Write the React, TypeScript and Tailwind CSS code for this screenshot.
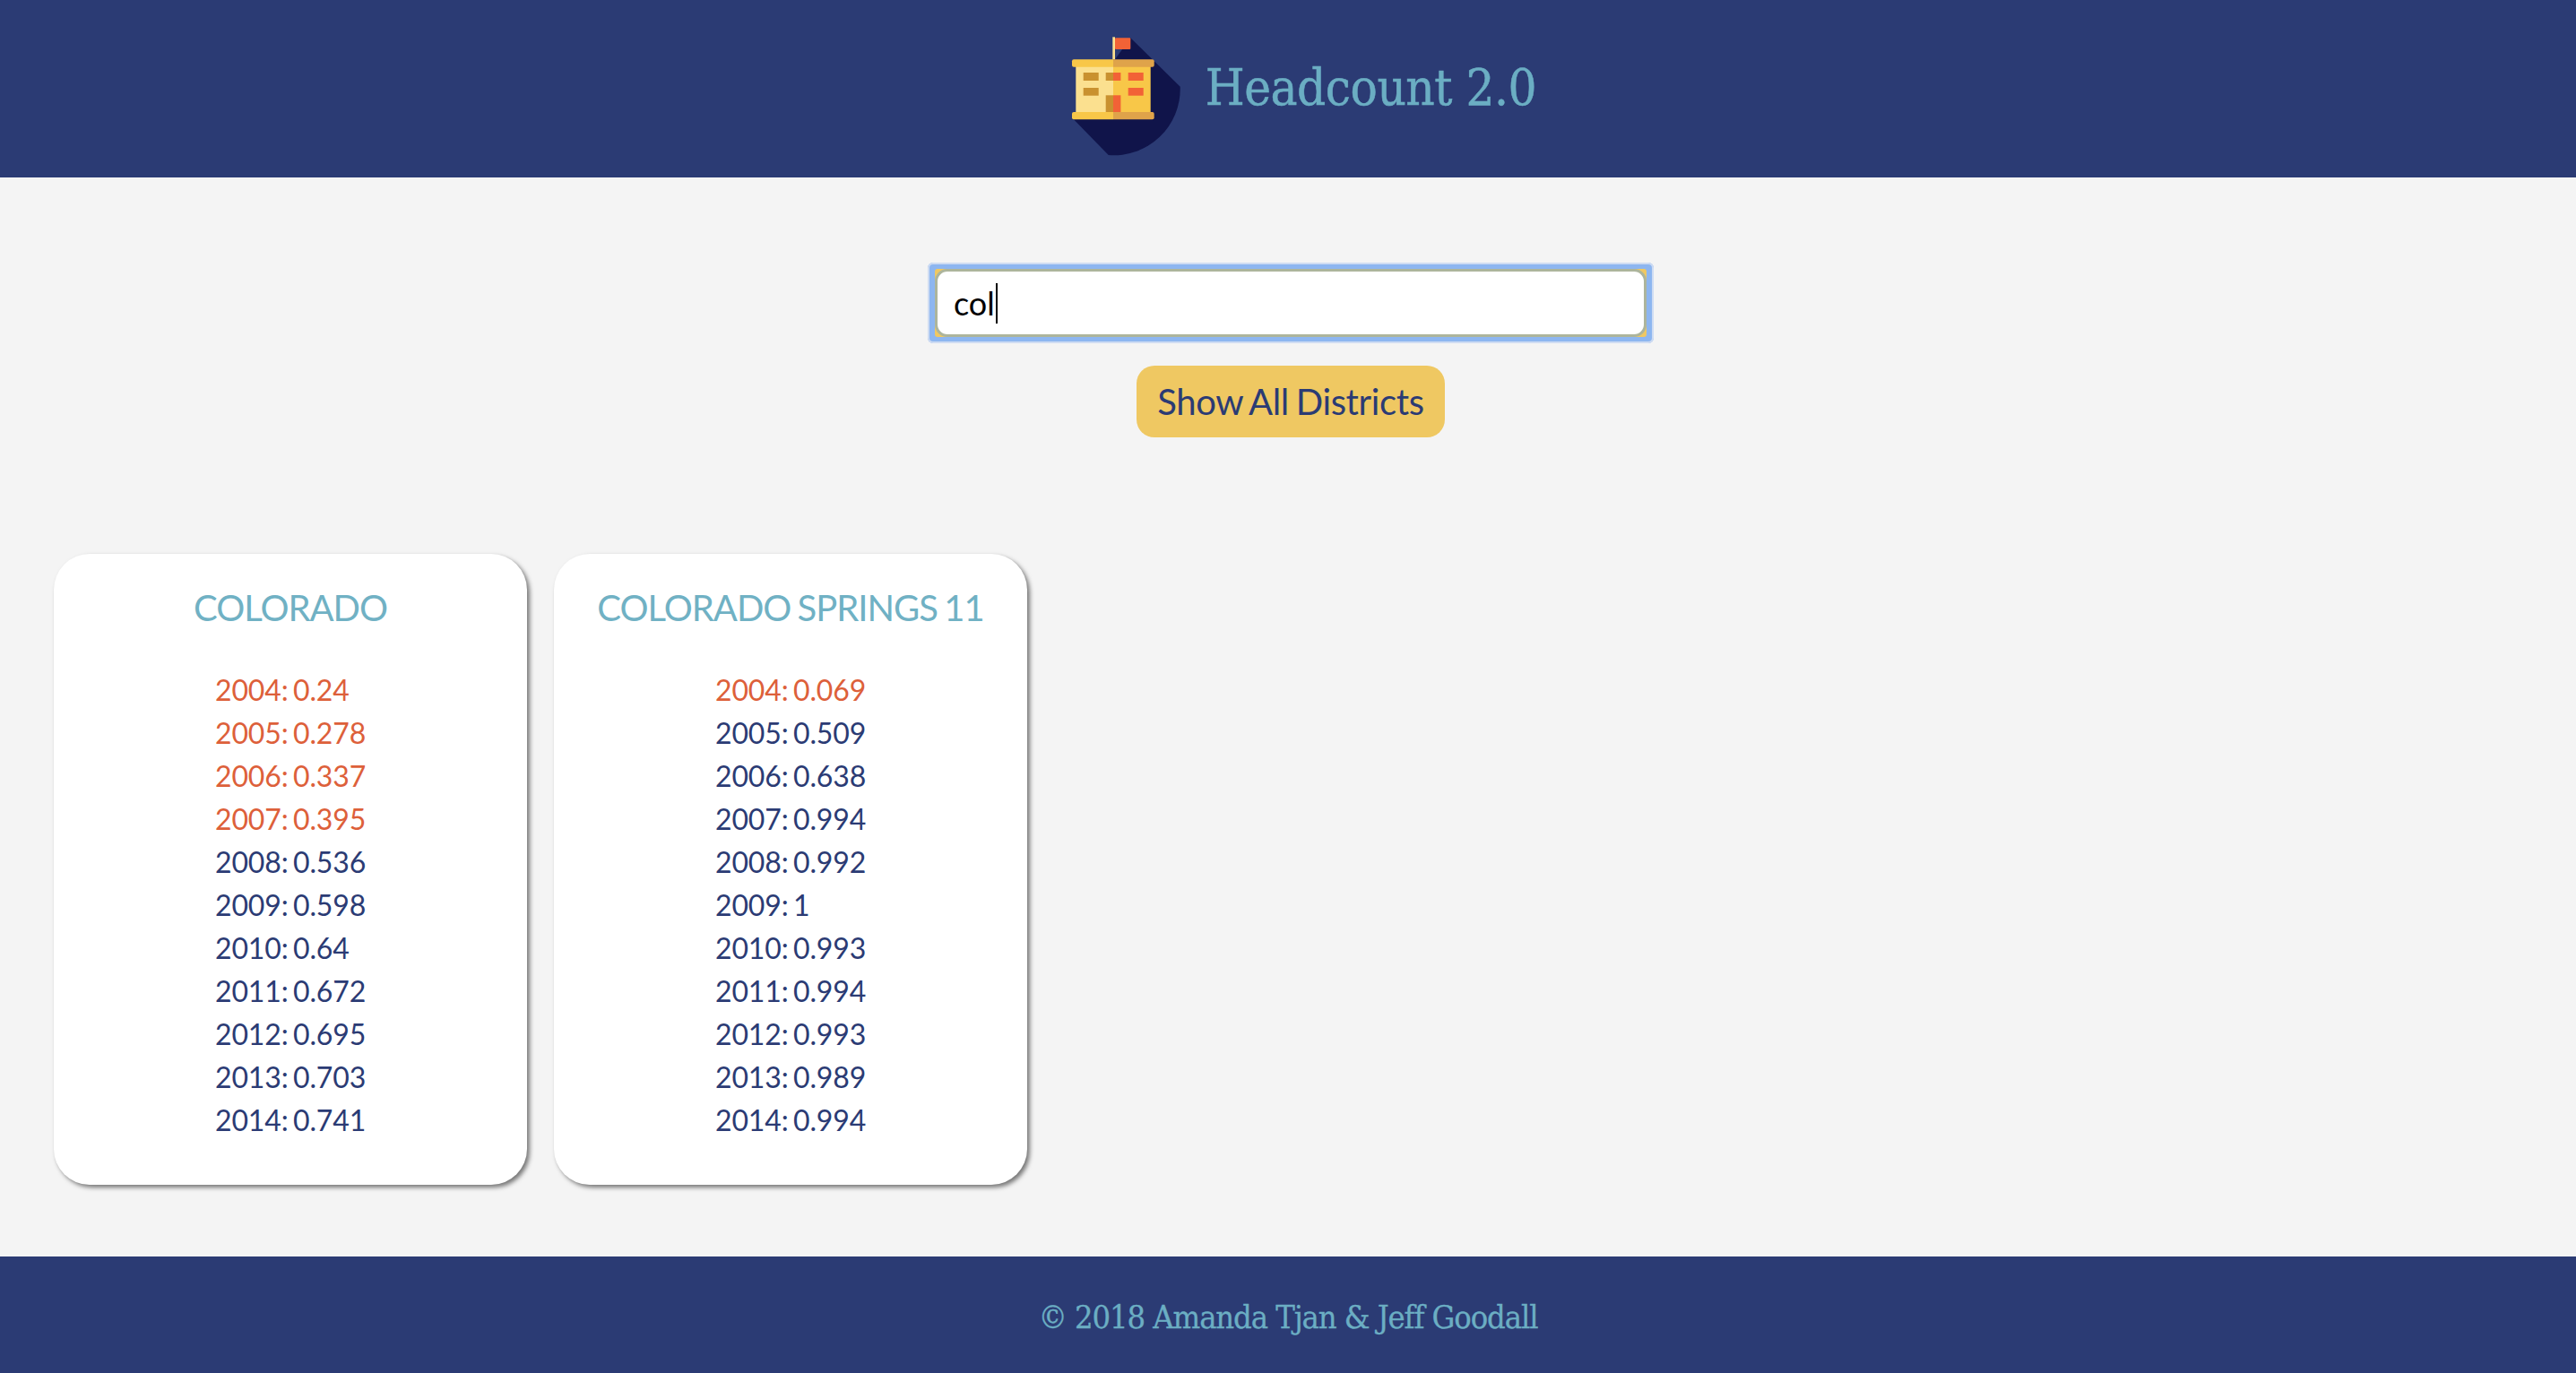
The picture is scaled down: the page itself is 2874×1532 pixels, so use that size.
const RED = "text-[#dd603a]";
const NAVY = "text-[#2b3b74]";

type District = {
  name: string;
  rows: [number, string, boolean][];
};

const DISTRICTS: District[] = [
  {
    name: "COLORADO",
    rows: [
      [2004, "0.24", true],
      [2005, "0.278", true],
      [2006, "0.337", true],
      [2007, "0.395", true],
      [2008, "0.536", false],
      [2009, "0.598", false],
      [2010, "0.64", false],
      [2011, "0.672", false],
      [2012, "0.695", false],
      [2013, "0.703", false],
      [2014, "0.741", false],
    ],
  },
  {
    name: "COLORADO SPRINGS 11",
    rows: [
      [2004, "0.069", true],
      [2005, "0.509", false],
      [2006, "0.638", false],
      [2007, "0.994", false],
      [2008, "0.992", false],
      [2009, "1", false],
      [2010, "0.993", false],
      [2011, "0.994", false],
      [2012, "0.993", false],
      [2013, "0.989", false],
      [2014, "0.994", false],
    ],
  },
];

function Logo() {
  return (
    <svg viewBox="0 0 150 150" className="mt-[10px] h-[150px] w-[150px] shrink-0">
      <path d="M80.3 13.3 L135.7 67.7 A74 74 0 0 1 55.7 144 L16.7 104 L61 40 Z" fill="#10144a" />
      <rect x="60.3" y="12.3" width="2.7" height="25" fill="#fbe08f" />
      <rect x="63" y="13.3" width="17.3" height="12.7" rx="1" fill="#f26236" />
      <rect x="19.3" y="45" width="41.7" height="52" fill="#fbe08f" />
      <rect x="61" y="45" width="41.7" height="52" fill="#f8c748" />
      <path d="M61 37.3 H17 a2 2 0 0 0 -2 2 v4.4 a2 2 0 0 0 2 2 H61 Z" fill="#f8c748" />
      <path d="M61 37.3 H104.7 a2 2 0 0 1 2 2 v4.4 a2 2 0 0 1 -2 2 H61 Z" fill="#dfa34a" />
      <path d="M61 96 H17 a2 2 0 0 0 -2 2 v4.3 a2 2 0 0 0 2 2 H61 Z" fill="#f8c748" />
      <path d="M61 96 H104.7 a2 2 0 0 1 2 2 v4.3 a2 2 0 0 1 -2 2 H61 Z" fill="#dfa34a" />
      <rect x="27.7" y="52" width="17" height="9" fill="#c9912f" />
      <rect x="27.7" y="69" width="17" height="8.7" fill="#c9912f" />
      <rect x="52.7" y="52" width="8.3" height="9" fill="#c9912f" />
      <rect x="61" y="52" width="8.4" height="9" fill="#f26236" />
      <rect x="52.7" y="77.3" width="8.3" height="18.7" fill="#c9912f" />
      <rect x="61" y="77.3" width="8.4" height="18.7" fill="#f26236" />
      <rect x="77.7" y="52" width="17" height="9" fill="#f26236" />
      <rect x="77.7" y="69" width="17" height="8.7" fill="#f26236" />
    </svg>
  );
}

function DistrictCard({ district }: { district: District }) {
  return (
    <div className="h-[704px] w-[528px] rounded-[40px] bg-white pt-[30px] shadow-[3px_3px_5px_#777777]">
      <h2 className="mb-[38px] text-center text-[40px] leading-[60px] tracking-[-1px] text-[#70b1c4] [word-spacing:-2px]">
        {district.name}
      </h2>
      <ul className="mx-auto w-[168px] text-[32px] leading-[48px] tracking-[-0.15px] whitespace-nowrap [word-spacing:-2.5px]">
        {district.rows.map(([year, value, low]) => (
          <li key={year} className={low ? RED : NAVY}>
            {year}: {value}
          </li>
        ))}
      </ul>
    </div>
  );
}

export default function App() {
  return (
    <div className="flex min-h-[1532px] flex-col bg-[#f4f4f4] font-['Lato','Open_Sans',sans-serif]">
      <header className="flex h-[198px] items-center justify-center bg-[#2b3b74] pl-[21px]">
        <Logo />
        <h1 className="mb-[3px] ml-[14px] font-['DejaVu_Serif_Condensed','DejaVu_Serif',serif] text-[56px] tracking-[-0.5px] text-[#6baec3] [-webkit-text-stroke:0.5px_#6baec3]">
          Headcount 2.0
        </h1>
      </header>

      <main className="flex flex-1 flex-col">
        <div className="flex flex-col items-center pt-[95px] pl-[6px]">
          <div className="h-[90px] w-[810px] rounded-[6px] bg-[#8db6f0] px-[8px] py-[7px] ring-[2px] ring-[#cfdcf2] ring-inset">
            <div className="h-full rounded-[3px] bg-[#efc862]">
              <div className="flex h-full items-center rounded-[14px] border-[3px] border-[#adb59c] bg-white pl-[18px] text-[36px] text-black">
                col
                <span className="ml-[1px] h-[45px] w-[2px] bg-black" />
              </div>
            </div>
          </div>
          <button
            type="button"
            className="mt-[25px] h-[80px] w-[344px] rounded-[20px] bg-[#efc862] text-[40px] tracking-[-0.35px] text-[#2b3b74] [word-spacing:-2px]"
          >
            Show All Districts
          </button>
        </div>

        <div className="flex gap-[30px] pt-[130px] pl-[60px]">
          {DISTRICTS.map((d) => (
            <DistrictCard key={d.name} district={d} />
          ))}
        </div>
      </main>

      <footer className="flex h-[130px] items-center justify-center bg-[#2b3b74] pt-[6px] font-['DejaVu_Serif_Condensed','DejaVu_Serif',serif] text-[36px] tracking-[-1.1px] text-[#6baec3] [-webkit-text-stroke:0.3px_#6baec3]">
        © 2018 Amanda Tjan &amp; Jeff Goodall
      </footer>
    </div>
  );
}
